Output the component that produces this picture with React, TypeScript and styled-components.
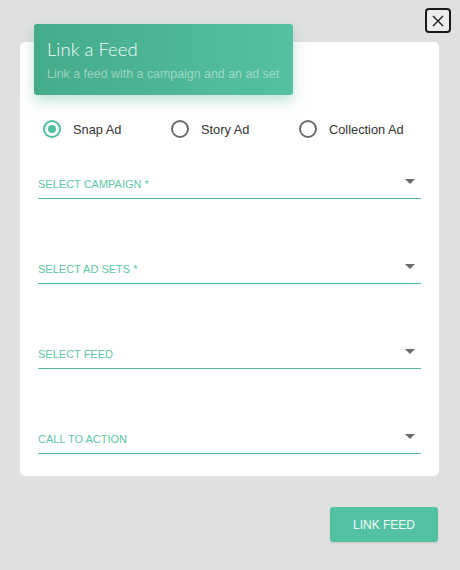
import React, { useState } from 'react'
import styled, { createGlobalStyle } from 'styled-components'

const GlobalStyle = createGlobalStyle`
  html, body {
    margin: 0;
    padding: 0;
    background: #e0e0e0;
  }
  body {
    font-family: 'Liberation Sans', Arial, sans-serif;
  }
`

const Page = styled.div`
  width: 460px;
  height: 570px;
  box-sizing: border-box;
  padding: 8px 0 0 20px;
  display: flex;
  flex-direction: column;
  overflow: hidden;
`

const TopBar = styled.div`
  display: flex;
  justify-content: flex-end;
  padding-right: 9px;
`

const CloseButton = styled.button`
  width: 26px;
  height: 25px;
  box-sizing: border-box;
  border: 2px solid #1a1a1a;
  border-radius: 4px;
  background: #ececec;
  display: flex;
  align-items: center;
  justify-content: center;
  padding: 0;
  cursor: pointer;
`

const Card = styled.div`
  margin-top: 9px;
  width: 419px;
  height: 434px;
  box-sizing: border-box;
  background: #fff;
  border-radius: 5px;
  display: flex;
  flex-direction: column;
  padding: 0 18px 0 18px;
`

const Header = styled.div`
  margin: -18px 0 0 -4px;
  width: 259px;
  height: 71px;
  box-sizing: border-box;
  border-radius: 3px;
  background: linear-gradient(90deg, #45ab8b 0%, #55c0a2 100%);
  box-shadow: 0 6px 14px rgba(70, 170, 140, 0.35);
  padding: 13px 0 0 13px;
  display: flex;
  flex-direction: column;
`

const Title = styled.div`
  font-family: Lato, 'Open Sans', sans-serif;
  font-weight: 300;
  font-size: 18.5px;
  line-height: 24px;
  color: #f4fbf8;
`

const Subtitle = styled.div`
  margin-top: 5px;
  font-family: 'Liberation Sans', Arial, sans-serif;
  font-size: 12.4px;
  line-height: 16px;
  color: rgba(255, 255, 255, 0.45);
`

const RadioRow = styled.div`
  margin: 25px 0 0 5px;
  display: flex;
`

const RadioOption = styled.label`
  width: 128px;
  flex-shrink: 0;
  display: flex;
  align-items: center;
  gap: 12px;
  cursor: pointer;
  font-size: 12.8px;
  color: #333;
`

const RadioCircle = styled.span<{ checked: boolean }>`
  width: 18px;
  height: 18px;
  box-sizing: border-box;
  border-radius: 50%;
  border: 2px solid ${p => (p.checked ? '#4fbf9f' : '#6e6e6e')};
  display: flex;
  align-items: center;
  justify-content: center;
  &::after {
    content: '';
    width: 8px;
    height: 8px;
    border-radius: 50%;
    background: ${p => (p.checked ? '#4fbf9f' : 'transparent')};
  }
`

const Fields = styled.div`
  margin-top: 40px;
  display: flex;
  flex-direction: column;
  gap: 64px;
`

const Field = styled.div`
  display: flex;
  align-items: center;
  justify-content: space-between;
  height: 20px;
  border-bottom: 1px solid #55bb9c;
`

const FieldLabel = styled.span`
  font-size: 11px;
  line-height: 14px;
  color: #5ec7a7;
  margin-top: -8px;
`

const Caret = styled.span`
  width: 0;
  height: 0;
  border-left: 5px solid transparent;
  border-right: 5px solid transparent;
  border-top: 5px solid #6a6a6a;
  margin: -13px 6px 0 0;
`

const Footer = styled.div`
  display: flex;
  justify-content: flex-end;
  padding-right: 22px;
  margin-top: 31px;
`

const LinkButton = styled.button`
  width: 108px;
  height: 35px;
  border: none;
  border-radius: 3px;
  background: #52c1a4;
  color: #f4fbf8;
  font-family: 'Liberation Sans', Arial, sans-serif;
  font-size: 12px;
  box-shadow: 0 1px 2px rgba(0, 0, 0, 0.12);
  cursor: pointer;
`

const adTypes = ['Snap Ad', 'Story Ad', 'Collection Ad']
const fields = ['SELECT CAMPAIGN *', 'SELECT AD SETS *', 'SELECT FEED', 'CALL TO ACTION']

export default function App() {
  const [adType, setAdType] = useState('Snap Ad')

  return (
    <>
      <GlobalStyle />
      <Page>
        <TopBar>
          <CloseButton aria-label="close">
            <svg width="14" height="14" viewBox="0 0 14 14">
              <path d="M2 2 L12 12 M12 2 L2 12" stroke="#1a1a1a" strokeWidth="1.4" fill="none" />
            </svg>
          </CloseButton>
        </TopBar>

        <Card>
          <Header>
            <Title>Link a Feed</Title>
            <Subtitle>Link a feed with a campaign and an ad set</Subtitle>
          </Header>

          <RadioRow>
            {adTypes.map(t => (
              <RadioOption key={t} onClick={() => setAdType(t)}>
                <RadioCircle checked={adType === t} />
                {t}
              </RadioOption>
            ))}
          </RadioRow>

          <Fields>
            {fields.map(f => (
              <Field key={f}>
                <FieldLabel>{f}</FieldLabel>
                <Caret />
              </Field>
            ))}
          </Fields>
        </Card>

        <Footer>
          <LinkButton>LINK FEED</LinkButton>
        </Footer>
      </Page>
    </>
  )
}
